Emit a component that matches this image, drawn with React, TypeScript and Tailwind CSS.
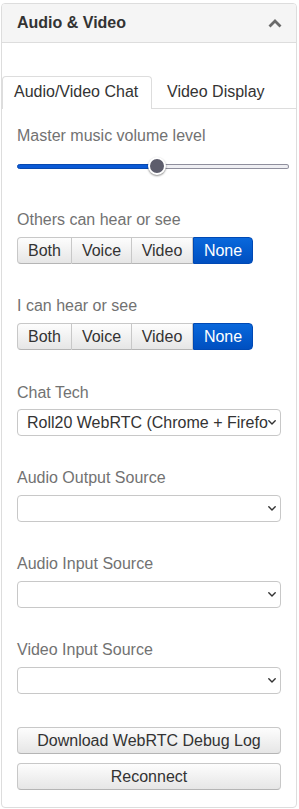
import React from "react";

const Label = ({ children, className = "" }: { children: React.ReactNode; className?: string }) => (
  <div className={`h-[20px] leading-[20px] text-[16px] text-[#727272] ${className}`}>{children}</div>
);

const Group = ({ className = "" }: { className?: string }) => {
  const items = [
    { t: "Both", w: "w-[55px]" },
    { t: "Voice", w: "w-[60px]" },
    { t: "Video", w: "w-[61px]" },
  ];
  return (
    <div className={`flex h-[27px] ${className}`}>
      {items.map((it, i) => (
        <div
          key={it.t}
          className={`${it.w} h-[27px] flex items-center justify-center text-[16px] text-[#333] bg-linear-to-b from-[#fdfdfd] to-[#e6e6e6] border border-[#c8c8c8] border-b-[#b5b5b5] ${
            i === 0 ? "rounded-l-[4px]" : "border-l-0"
          }`}
        >
          {it.t}
        </div>
      ))}
      <div className="w-[60px] h-[27px] flex items-center justify-center text-[16px] text-white bg-linear-to-b from-[#0a68dc] to-[#004fc0] border border-[#0049b4] rounded-r-[4px]">
        None
      </div>
    </div>
  );
};

const Chevron = () => (
  <svg width="8" height="5" viewBox="0 0 8 5" className="shrink-0">
    <polyline points="0.8,0.8 4,4 7.2,0.8" fill="none" stroke="#333" strokeWidth="1.4" strokeLinecap="round" strokeLinejoin="round" />
  </svg>
);

const Select = ({ value = "", className = "" }: { value?: string; className?: string }) => (
  <div className={`w-[264px] h-[27px] border border-[#c8c8c8] rounded-[4px] bg-white flex items-center pl-[9px] pr-[4px] ${className}`}>
    <div className="flex-1 overflow-hidden whitespace-nowrap text-[16px] text-[#333] leading-[20px] pr-[3px]">{value}</div>
    <Chevron />
  </div>
);

const Btn = ({ children, className = "" }: { children: React.ReactNode; className?: string }) => (
  <div className={`w-[264px] h-[27px] flex items-center justify-center text-[16px] text-[#333] bg-linear-to-b from-[#fdfdfd] to-[#e6e6e6] border border-[#c8c8c8] border-b-[#b5b5b5] rounded-[4px] ${className}`}>
    {children}
  </div>
);

export default function App() {
  return (
    <div className="w-[299px] h-[809px] bg-white pt-[3px] pl-[1px] font-['Liberation_Sans',Arial,sans-serif]">
      <div className="w-[296px] border border-[#dddddd] rounded-[4px] overflow-hidden bg-white">
        <div className="h-[39px] bg-[#f5f5f5] border-b border-[#dddddd] flex items-center justify-between pl-[15px] pr-[14px]">
          <span className="text-[16px] font-bold text-[#333]">Audio &amp; Video</span>
          <svg width="14" height="9" viewBox="0 0 14 9">
            <polyline points="1.5,7.5 7,2 12.5,7.5" fill="none" stroke="#6a6a6a" strokeWidth="2.8" />
          </svg>
        </div>
        <div className="pt-[33px]">
          <div className="flex h-[33px] border-b border-[#dddddd]">
            <div className="w-[150px] h-[33px] -mb-px bg-white border border-b-0 border-[#dddddd] rounded-t-[4px] pt-[5px] pl-[11px] text-[16px] leading-[20px] text-[#333]">
              Audio/Video Chat
            </div>
            <div className="pt-[6px] pl-[15px] text-[16px] leading-[20px] text-[#333]">Video Display</div>
          </div>
          <div className="pl-[15px] pt-[17px] pb-[17px]">
            <Label>Master music volume level</Label>
            <div className="relative mt-[10px] h-[20px] w-[272px] flex items-center">
              <div className="flex w-full h-[5px]">
                <div className="w-[140px] h-[5px] bg-[#0a5ad6] rounded-l-full border border-[#0849b0]" />
                <div className="flex-1 h-[5px] bg-[#efeff3] border border-[#8f8f9d] border-l-0 rounded-r-full" />
              </div>
              <div className="absolute left-[131px] top-[1px] w-[18px] h-[18px] rounded-full bg-[#5d5d6c] border-2 border-white shadow-[0_1px_2px_rgba(0,0,0,0.45)]" />
            </div>
            <Label className="mt-[34px]">Others can hear or see</Label>
            <Group className="mt-[7px]" />
            <Label className="mt-[32px]">I can hear or see</Label>
            <Group className="mt-[7px]" />
            <Label className="mt-[33px]">Chat Tech</Label>
            <Select className="mt-[6px]" value="Roll20 WebRTC (Chrome + Firefox)" />
            <Label className="mt-[32px]">Audio Output Source</Label>
            <Select className="mt-[7px]" />
            <Label className="mt-[32px]">Audio Input Source</Label>
            <Select className="mt-[7px]" />
            <Label className="mt-[32px]">Video Input Source</Label>
            <Select className="mt-[7px]" />
            <Btn className="mt-[33px]">Download WebRTC Debug Log</Btn>
            <Btn className="mt-[9px]">Reconnect</Btn>
          </div>
        </div>
      </div>
    </div>
  );
}
